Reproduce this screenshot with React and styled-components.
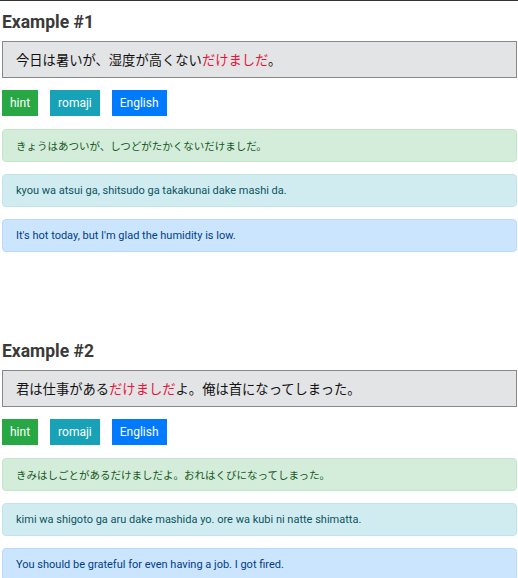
import React from "react";
import styled, { createGlobalStyle } from "styled-components";

const Global = createGlobalStyle`
  html, body { margin: 0; padding: 0; background: #fff; }
  body { font-family: Roboto, "Noto Sans CJK JP", sans-serif; }
`;

const Page = styled.div`
  border-top: 1px solid #333;
  padding: 0 1px 0 2px;
`;

const Section = styled.section`
  display: flex;
  flex-direction: column;
  padding-top: 11px;
  height: 318px;
`;

const Heading = styled.h2`
  margin: 0 0 9px;
  font-family: Roboto, sans-serif;
  font-weight: 700;
  font-size: 17.5px;
  line-height: 20px;
  color: #3a3a3a;
`;

const Sentence = styled.div`
  border: 1px solid #888;
  background: #e3e4e6;
  padding: 10px 13px;
  font-family: "Noto Sans CJK JP", sans-serif;
  font-size: 13.3px;
  line-height: 15px;
  color: #111;
`;

const Mark = styled.span`
  color: #e6153c;
`;

const Buttons = styled.div`
  display: flex;
  gap: 12px;
  margin-top: 12px;
`;

const Btn = styled.button`
  height: 26px;
  padding: 0 8px;
  border: none;
  border-radius: 0;
  background: ${(p) => p.$bg};
  color: #fff;
  font-family: Roboto, sans-serif;
  font-size: 12px;
`;

const Alerts = styled.div`
  display: flex;
  flex-direction: column;
  gap: 12px;
  margin-top: 13px;
`;

const palette = {
  green: { bg: "#d4edda", border: "#c3e6cb", fg: "#155724" },
  teal: { bg: "#d1ecf1", border: "#bee5eb", fg: "#0c5460" },
  blue: { bg: "#cce5ff", border: "#b8daff", fg: "#004085" },
};

const Alert = styled.div`
  height: 33px;
  box-sizing: border-box;
  display: flex;
  align-items: center;
  padding: 0 13px;
  border: 1px solid ${(p) => palette[p.$kind].border};
  background: ${(p) => palette[p.$kind].bg};
  color: ${(p) => palette[p.$kind].fg};
  border-radius: 4px;
  font-family: Roboto, "Noto Sans CJK JP", sans-serif;
  font-size: ${(p) => (p.$jp ? "10.5px" : "11px")};
`;

const examples = [
  {
    title: "Example #1",
    before: "今日は暑いが、湿度が高くない",
    mark: "だけましだ",
    after: "。",
    hint: "きょうはあついが、しつどがたかくないだけましだ。",
    romaji: "kyou wa atsui ga, shitsudo ga takakunai dake mashi da.",
    english: "It's hot today, but I'm glad the humidity is low.",
  },
  {
    title: "Example #2",
    before: "君は仕事がある",
    mark: "だけましだ",
    after: "よ。俺は首になってしまった。",
    hint: "きみはしごとがあるだけましだよ。おれはくびになってしまった。",
    romaji: "kimi wa shigoto ga aru dake mashida yo. ore wa kubi ni natte shimatta.",
    english: "You should be grateful for even having a job. I got fired.",
  },
];

export default function App() {
  return (
    <Page>
      <Global />
      {examples.map((ex) => (
        <Section key={ex.title}>
          <Heading>{ex.title}</Heading>
          <Sentence>
            {ex.before}
            <Mark>{ex.mark}</Mark>
            {ex.after}
          </Sentence>
          <Buttons>
            <Btn $bg="#28a745">hint</Btn>
            <Btn $bg="#17a2b8">romaji</Btn>
            <Btn $bg="#007bff">English</Btn>
          </Buttons>
          <Alerts>
            <Alert $kind="green" $jp>{ex.hint}</Alert>
            <Alert $kind="teal">{ex.romaji}</Alert>
            <Alert $kind="blue">{ex.english}</Alert>
          </Alerts>
        </Section>
      ))}
    </Page>
  );
}
